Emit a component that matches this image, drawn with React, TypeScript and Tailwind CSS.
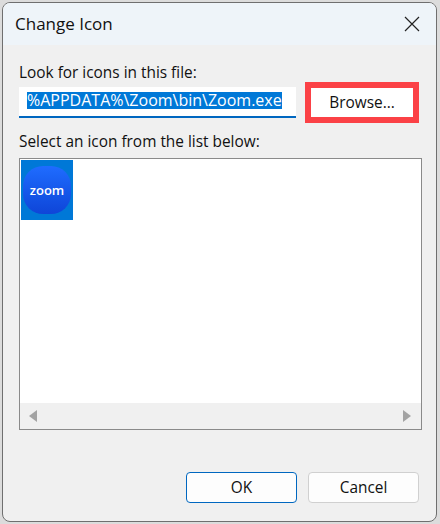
export default function App() {
  return (
    <div className="w-[440px] h-[524px] bg-[#dcdcdc] pl-[2px] pr-[3px] pt-[2px] pb-[2px] font-['Open_Sans',sans-serif] text-[#111]">
      <div className="w-full h-full flex flex-col bg-[#f0f0f0] rounded-[8px] overflow-hidden border border-[#6f6f6f]">
        <div className="h-[42px] shrink-0 flex items-center justify-between bg-[#eef4f9] pl-[12px] pr-[16px]">
          <span className="text-[17px] leading-[22px]">Change Icon</span>
          <svg width="16" height="16" viewBox="0 0 16 16" fill="none" stroke="#222" strokeWidth="1.2">
            <path d="M1 1L15 15M15 1L1 15" />
          </svg>
        </div>
        <div className="flex-1 flex flex-col pl-[16px]">
          <div className="text-[15.4px] leading-[20px] mt-[18px]">Look for icons in this file:</div>
          <div className="flex items-center mt-[-1px] h-[41px]">
            <div className="w-[277px] h-[31px] bg-white border-b-2 border-[#0067c0] pl-[8px] pt-[5px]">
              <span className="block w-fit bg-[#0078d7] text-white text-[16px] leading-[17px]">%APPDATA%\Zoom\bin\Zoom.exe</span>
            </div>
            <div className="ml-[9px] w-[114px] h-[41px] bg-white border-[6px] border-[#fb4146] flex items-center justify-center text-[15.4px]">
              Browse...
            </div>
          </div>
          <div className="text-[15.4px] leading-[20px] mt-[9px]">Select an icon from the list below:</div>
          <div className="mt-[6px] w-[403px] h-[272px] border border-[#8a8a8a] bg-white flex flex-col">
            <div className="flex-1 p-[1px]">
              <div className="w-[52px] h-[60px] bg-[#0078d7] flex items-center justify-center">
                <div className="w-[48px] h-[48px] rounded-[20px] bg-gradient-to-b from-[#1f6cff] to-[#0f45d8] flex items-center justify-center">
                  <span className="text-white text-[13px] font-semibold leading-none">zoom</span>
                </div>
              </div>
            </div>
            <div className="h-[26px] bg-[#f0f0f0] flex items-center justify-between pl-[9px] pr-[10px]">
              <div className="w-0 h-0 border-y-[6px] border-y-transparent border-r-[8px] border-r-[#a3a3a3]" />
              <div className="w-0 h-0 border-y-[6px] border-y-transparent border-l-[8px] border-l-[#a3a3a3]" />
            </div>
          </div>
          <div className="flex gap-[11px] mt-[42px] ml-[167px]">
            <div className="w-[111px] h-[31px] bg-[#fdfdfd] border border-[#0067c0] rounded-[4px] flex items-center justify-center text-[15.4px]">OK</div>
            <div className="w-[111px] h-[31px] bg-[#fdfdfd] border border-[#d0d0d0] rounded-[4px] flex items-center justify-center text-[15.4px]">Cancel</div>
          </div>
        </div>
      </div>
    </div>
  )
}
